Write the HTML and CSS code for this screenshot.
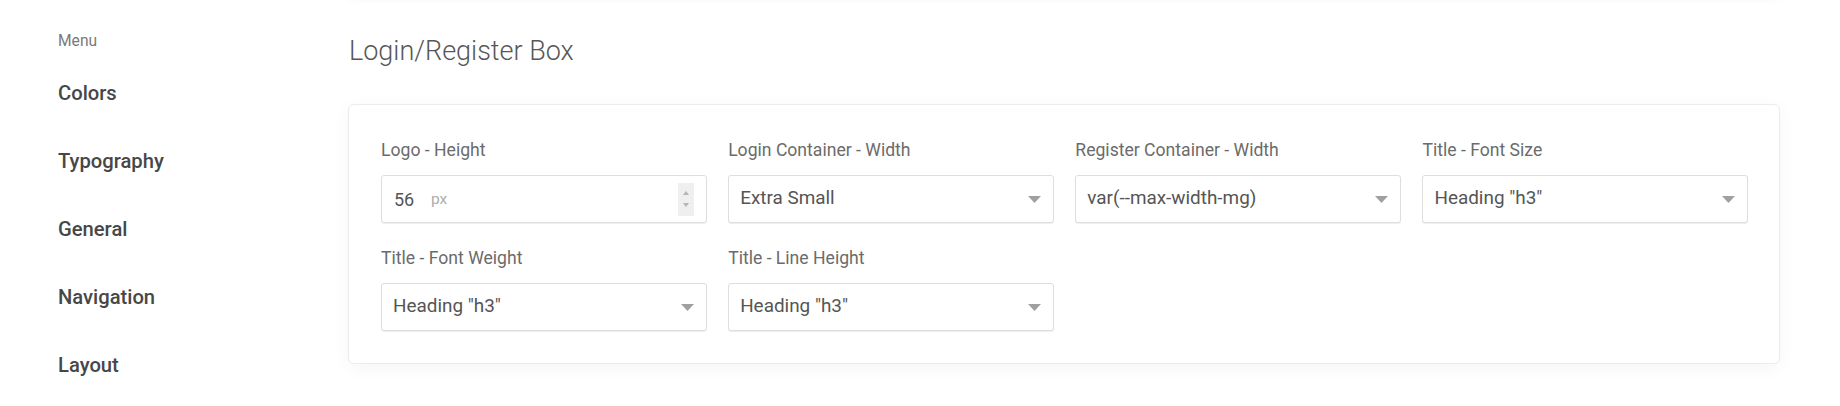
FILE: index.html
```html
<!DOCTYPE html>
<html lang="en">
<head>
<meta charset="utf-8">
<title>Login/Register Box</title>
<link rel="stylesheet" href="styles.css">
</head>
<body>
<div class="layout">
  <aside class="sidebar">
    <div class="menu-label">Menu</div>
    <nav class="menu">
      <a class="menu-item">Colors</a>
      <a class="menu-item">Typography</a>
      <a class="menu-item">General</a>
      <a class="menu-item">Navigation</a>
      <a class="menu-item">Layout</a>
    </nav>
  </aside>
  <main class="main">
    <div class="prev-card"></div>
    <h2 class="section-title">Login/Register Box</h2>
    <section class="card">
      <div class="field">
        <label class="field-label">Logo - Height</label>
        <div class="input number-input">
          <span class="value">56</span>
          <span class="unit">px</span>
          <span class="spinner">
            <svg width="6" height="4" viewBox="0 0 6 4"><polygon points="0,4 6,4 3,0" fill="#b5b5b5"/></svg>
            <svg width="6" height="4" viewBox="0 0 6 4"><polygon points="0,0 6,0 3,4" fill="#b5b5b5"/></svg>
          </span>
        </div>
      </div>
      <div class="field">
        <label class="field-label">Login Container - Width</label>
        <div class="input select">
          <span class="value">Extra Small</span>
          <svg class="caret" width="13" height="7" viewBox="0 0 13 7"><polygon points="0,0 13,0 6.5,7" fill="#a0a0a0"/></svg>
        </div>
      </div>
      <div class="field">
        <label class="field-label">Register Container - Width</label>
        <div class="input select">
          <span class="value">var(--max-width-mg)</span>
          <svg class="caret" width="13" height="7" viewBox="0 0 13 7"><polygon points="0,0 13,0 6.5,7" fill="#a0a0a0"/></svg>
        </div>
      </div>
      <div class="field">
        <label class="field-label">Title - Font Size</label>
        <div class="input select">
          <span class="value">Heading "h3"</span>
          <svg class="caret" width="13" height="7" viewBox="0 0 13 7"><polygon points="0,0 13,0 6.5,7" fill="#a0a0a0"/></svg>
        </div>
      </div>
      <div class="field">
        <label class="field-label">Title - Font Weight</label>
        <div class="input select">
          <span class="value">Heading "h3"</span>
          <svg class="caret" width="13" height="7" viewBox="0 0 13 7"><polygon points="0,0 13,0 6.5,7" fill="#a0a0a0"/></svg>
        </div>
      </div>
      <div class="field">
        <label class="field-label">Title - Line Height</label>
        <div class="input select">
          <span class="value">Heading "h3"</span>
          <svg class="caret" width="13" height="7" viewBox="0 0 13 7"><polygon points="0,0 13,0 6.5,7" fill="#a0a0a0"/></svg>
        </div>
      </div>
    </section>
  </main>
</div>
</body>
</html>
```
FILE: styles.css
```css
* { box-sizing: border-box; }

html, body {
  margin: 0;
  background: #ffffff;
  font-family: Roboto, "Noto Sans", "Liberation Sans", sans-serif;
  overflow: hidden;
}

.layout {
  display: flex;
  width: 1840px;
  height: 406px;
}

.sidebar {
  width: 348px;
  flex: none;
  padding: 31px 0 0 58px;
}

.menu-label {
  font-size: 15.6px;
  line-height: 20px;
  color: #7a7a7a;
  margin-bottom: 8px;
}

.menu {
  display: flex;
  flex-direction: column;
}

.menu-item {
  display: block;
  height: 68px;
  line-height: 68px;
  font-size: 20.2px;
  font-weight: 500;
  color: #474747;
}

.main {
  width: 1432px;
  flex: none;
}

.prev-card {
  height: 30px;
  margin-top: -34px;
  margin-bottom: 39px;
  background: #fff;
  border-radius: 6px;
  box-shadow: 0 2px 10px rgba(0, 0, 0, 0.06);
}

.section-title {
  margin: 0 0 37px 1px;
  font-size: 27px;
  line-height: 32px;
  font-weight: 300;
  color: #575757;
}

.card {
  display: grid;
  grid-template-columns: repeat(4, 1fr);
  column-gap: 21.6px;
  row-gap: 25px;
  padding: 35px 31px 32px 32px;
  background: #fff;
  border: 1px solid #ececec;
  border-radius: 6px;
  box-shadow: 0 4px 18px rgba(0, 0, 0, 0.045);
}

.field {
  display: flex;
  flex-direction: column;
  gap: 15px;
}

.field-label {
  font-size: 17.6px;
  line-height: 20px;
  color: #6b6b6b;
}

.input {
  height: 48px;
  display: flex;
  align-items: center;
  padding: 0 12px 3px 11px;
  border: 1px solid #dedede;
  border-radius: 3px;
  box-shadow: 0 1px 1px rgba(0, 0, 0, 0.07);
  background: #fff;
}

.value {
  font-size: 18.9px;
  color: #555555;
  flex: 1;
}

.number-input {
  padding-left: 12px;
  padding-bottom: 0;
}

.number-input .value {
  flex: none;
  font-size: 18px;
  width: 37px;
}

.unit {
  flex: 1;
  font-size: 15.5px;
  color: #adadad;
}

.spinner {
  width: 16px;
  height: 33px;
  background: #efefef;
  display: flex;
  flex-direction: column;
  align-items: center;
  justify-content: space-around;
  padding: 4px 0;
}

.caret {
  flex: none;
  margin-top: 3px;
}
```
